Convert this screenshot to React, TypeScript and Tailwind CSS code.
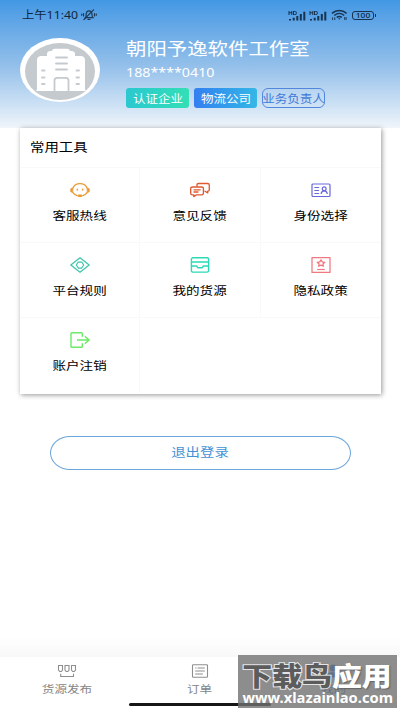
import React from 'react';
import { clsx } from 'clsx';

type IconProps = { className?: string };

// Single-line label; scale-x classes on it give the wide lettering
const Wide: React.FC<{ className?: string; children: React.ReactNode }> = ({ className, children }) => (
  <span className={clsx('inline-block whitespace-nowrap', className)}>{children}</span>
);

const HeadsetIcon: React.FC<IconProps> = ({ className }) => (
  <svg className={className} viewBox="0 0 20 16" fill="none" stroke="#ea9a35" strokeWidth="1.3" strokeLinecap="round">
    <path d="M3 6C4 3.200 6.600 1.700 10 1.700S16 3.200 17 6" />
    <path d="M3 10.600c.9 1.400 2.300 2.500 4.200 3.100M17 10.600c-.9 1.400-2.300 2.500-4.200 3.100" />
    <path d="M2.900 5.700C1 5.900.3 6.900.3 8.200s.7 2.300 2.600 2.500zM17.100 5.700c1.900.2 2.600 1.200 2.600 2.500s-.7 2.300-2.600 2.500z" fill="#ea9a35" strokeWidth=".3" />
    <path d="M7.300 7.200v.8M12.700 7.200v.8" strokeWidth="1.500" />
    <path d="M8.900 13.800h2.200" strokeWidth="2.400" />
  </svg>
);

const FeedbackIcon: React.FC<IconProps> = ({ className }) => (
  <svg className={className} viewBox="0 0 20 16" fill="none" stroke="#df5a30" strokeWidth="1.35" strokeLinejoin="round" strokeLinecap="round">
    <path d="M7 4V2.800C7 2 7.700 1.500 8.500 1.500h9c1 0 1.800.5 1.800 1.400v4.800c0 .9-.7 1.400-1.600 1.400v1.800L15 9.200" />
    <path d="M2.400 5h9.300c1 0 1.700.5 1.700 1.300v5.200c0 .8-.7 1.300-1.700 1.300H6.400L3.800 14.600v-1.800H2.400c-1 0-1.700-.5-1.700-1.300V6.300C.7 5.500 1.400 5 2.400 5z" />
    <path d="M4 7.800h6.200M4 10h4" />
  </svg>
);

const IdCardIcon: React.FC<IconProps> = ({ className }) => (
  <svg className={className} viewBox="0 0 20 16" fill="none" stroke="#6868dc" strokeWidth="1.2">
    <rect x="1" y="2" width="18" height="12.500" rx="1" />
    <path d="M3.400 5.500h4.700M3.400 8.500h4.700M3.400 11.500h4.700" />
    <circle cx="13.200" cy="6.800" r="1.900" />
    <path d="M10.100 12c.2-2 1.200-3.200 3.100-3.200s2.900 1.200 3.100 3.200" />
  </svg>
);

const RulesIcon: React.FC<IconProps> = ({ className }) => (
  <svg className={className} viewBox="0 0 20 16" fill="none" stroke="#3fc4ab" strokeWidth="1.25" strokeLinejoin="round">
    <path d="M10 .8 19.200 8 10 15.200.8 8z" />
    <path d="M8.300 5h3.400L13.700 8l-2 3H8.300l-2-3z" />
  </svg>
);

const GoodsIcon: React.FC<IconProps> = ({ className }) => (
  <svg className={className} viewBox="0 0 20 16" fill="none" stroke="#2bdab5" strokeWidth="1.4" strokeLinejoin="round">
    <rect x="1.400" y=".8" width="17.200" height="14.300" rx="1.600" />
    <path d="M1.400 5h17.200M1.400 9h5.200c.6 0 .5 1.800 1.500 1.800h3.800c1 0 .9-1.800 1.500-1.800h5.200" />
  </svg>
);

const PrivacyIcon: React.FC<IconProps> = ({ className }) => (
  <svg className={className} viewBox="0 0 20 16" fill="none" stroke="#f07880" strokeWidth="1.25" strokeLinejoin="round">
    <rect x="1" y=".6" width="18" height="14.800" />
    <path d="m10 2.900 1.200 2 2.600.4-1.900 1.600.5 2.300L10 8.200 7.600 9.200l.5-2.300-1.900-1.600 2.600-.4z" strokeWidth="1.3" />
    <path d="M6.200 12.500h7.600" strokeWidth="1.2" />
  </svg>
);

const SignOutIcon: React.FC<IconProps> = ({ className }) => (
  <svg className={className} viewBox="0 0 20 16" fill="none" stroke="#6bea68" strokeWidth="1.4" strokeLinejoin="round">
    <path d="M12.300 4.800V1.600c0-.5-.3-.8-.8-.8H1.800c-.5 0-.8.3-.8.8v12.800c0 .5.3.8.8.8h9.700c.5 0 .8-.3.8-.8v-3.200" />
    <path d="M7 8h12M14.800 4.400 19.200 8l-4.400 3.600" />
  </svg>
);

const ShipIcon: React.FC<IconProps> = ({ className }) => (
  <svg className={className} viewBox="0 0 20 14" fill="none" stroke="#8e8e8e" strokeWidth="1.1">
    <path d="M1.500 1.500h4v4.500L4.300 7.500H2.700L1.500 6zM8 1.500h4v4.500l-1.200 1.500H9.200L8 6zM14.500 1.500h4v4.500l-1.200 1.500h-1.600L14.500 6z" />
    <path d="M3.700 9.800v2.700h12.800V9.800" />
  </svg>
);

const OrderIcon: React.FC<IconProps> = ({ className }) => (
  <svg className={className} viewBox="0 0 18 14" fill="none" stroke="#8e8e8e" strokeWidth="1.1">
    <rect x="1.500" y=".8" width="15" height="12.400" rx=".8" />
    <path d="M4.200 4h1.300M6.500 4h7.300M4.200 7h9.600M4.200 10h7.600" />
  </svg>
);

const MutedBell: React.FC<IconProps> = ({ className }) => (
  <svg className={className} viewBox="0 0 16 12" fill="none" stroke="#1d3b58" strokeWidth="1.2" strokeLinecap="round">
    <path d="M4.300 8.600c1-1 .7-2.200.9-3.900C5.500 3 6.500 1.800 8 1.800c1.700 0 2.700 1.200 2.900 2.900.2 1.700 0 2.900 1 3.900z" />
    <path d="M7 10.400h2M3 10.500 12.500.8M2.500 4.500v2.500M.7 5.200v1M13.500 4.500v2.500M15.300 5.200v1" />
  </svg>
);

const Signal: React.FC<IconProps> = ({ className }) => (
  <svg className={className} viewBox="0 0 18 11" fill="#17334f">
    <path d="M.5 1h1v1.300h1.800V1h1v4h-1V3.200H1.500V5h-1zM5 1h2c1.200 0 1.800.7 1.800 2S8.200 5 7 5H5zm1 .8v2.400h1c.6 0 .8-.4.8-1.200s-.2-1.200-.8-1.200z" fillRule="evenodd" />
    <path d="M1 9h2v1.500H1zM4.700 7.800h2v2.700h-2zM8.300 6h2v4.500h-2zM11.800 4h2v6.500h-2zM15.300 1.800h2v8.700h-2z" />
  </svg>
);

const Wifi: React.FC<IconProps> = ({ className }) => (
  <svg className={className} viewBox="0 0 18 12" fill="none" stroke="#17334f" strokeWidth="1.5">
    <path d="M1 4.300c4.500-4 11-4 15.500 0M3.500 6.500c3.200-2.700 7.300-2.700 10.500 0M6 8.500c1.800-1.300 3.700-1.300 5.500 0" />
    <path d="M7.500 9.500h2.600L8.800 11z" fill="#17334f" stroke="none" />
    <path d="M1.700 8.500v2.800M4 8.500v2.800M14.500 8.200v3M16 8.200v3" strokeWidth="1" />
  </svg>
);

const Building: React.FC<IconProps> = ({ className }) => (
  <svg className={className} viewBox="0 0 80 64">
    <ellipse cx="40" cy="32" rx="40" ry="32" fill="#fff" />
    <ellipse cx="40" cy="33.500" rx="35" ry="28.500" fill="#c5cacf" />
    <path d="M15 53c1.300 0 2-.7 2-2V22c0-2.600 1.700-4 4.500-4H27v-2c0-2 1.400-3 3.600-3h1.400c0-1.200 1.200-2.200 3-2.200h12c1.800 0 3 1 3 2.200h1.400c2.200 0 3.600 1 3.600 3v2h5.500c2.800 0 4.500 1.400 4.500 4v29c0 1.300.7 2 2 2z" fill="#fff" />
    <g fill="none" stroke="#c5cacf" strokeWidth="1.8" strokeLinecap="round">
      <path d="M36 19.500h11M36 25.500h11M36 31.500h11M22 32.500h2.500M22 39.500h2.500M22 46h2.500M56.500 32.500H59M56.500 39.500H59M56.500 46H59" />
      <path d="M34.500 53V42.500c0-1.800 1-2.700 2.800-2.700h8.400c1.800 0 2.800.9 2.800 2.700V53" />
    </g>
  </svg>
);

const tools: { icon: React.FC<IconProps>; label: string }[] = [
  { icon: HeadsetIcon, label: '客服热线' },
  { icon: FeedbackIcon, label: '意见反馈' },
  { icon: IdCardIcon, label: '身份选择' },
  { icon: RulesIcon, label: '平台规则' },
  { icon: GoodsIcon, label: '我的货源' },
  { icon: PrivacyIcon, label: '隐私政策' },
  { icon: SignOutIcon, label: '账户注销' },
];

const tagBase = 'flex h-5 w-[63px] items-center justify-center rounded-[3px] text-[11px] text-white';

export default function App() {
  return (
    <div className="relative flex h-[711px] w-[400px] flex-col overflow-hidden bg-white font-['Noto_Sans','Noto_Sans_CJK_SC',sans-serif] leading-none text-black">
      <header className="h-[128px] shrink-0 bg-linear-to-b from-[#4298e4] via-[#94c0ea] via-52% to-[#f0f5fa]">
        {/* Status bar */}
        <div className="flex h-[30px] items-center pl-[22px] text-[#10263c]">
          <div className="w-[57px] shrink-0 text-[11.5px]">
            <Wide className="origin-left scale-x-[1.07]">上午11:40</Wide>
          </div>
          <MutedBell className="ml-[2px] h-3 w-4 shrink-0" />
          <Signal className="ml-[191px] h-[11px] w-[18px] shrink-0" />
          <Signal className="ml-[3px] h-[11px] w-[18px] shrink-0" />
          <Wifi className="ml-1 h-3 w-[17px] shrink-0" />
          <div className="ml-[4px] flex h-[9px] w-[22px] shrink-0 items-center justify-center rounded-[3px] border border-[#17334f] text-[7px]">
            <Wide className="scale-x-[1.2] font-medium">100</Wide>
          </div>
          <div className="ml-px h-[3px] w-px bg-[#17334f]" />
        </div>

        <div className="flex pl-5">
          <Building className="mt-2 h-16 w-20 shrink-0" />
          <div className="ml-[26px] flex flex-col items-start">
            <Wide className="mt-[10px] origin-left scale-x-[1.2] text-[17px] leading-[18px] text-white">朝阳予逸软件工作室</Wide>
            <Wide className="mt-[7px] origin-left scale-x-[1.14] text-[12.5px] leading-[16px] text-white">188****0410</Wide>
            <div className="mt-[7px] flex gap-[5px]">
              <div className={clsx(tagBase, 'bg-linear-to-r from-[#2bc8cf] to-[#33dfb5]')}>
                <Wide className="scale-x-[1.14]">认证企业</Wide>
              </div>
              <div className={clsx(tagBase, 'bg-linear-to-r from-[#347ff0] to-[#35b7e6]')}>
                <Wide className="scale-x-[1.14]">物流公司</Wide>
              </div>
              <div className="flex h-5 w-[63px] items-center justify-center rounded-[6px] border border-[#5287dc] text-[11px] text-[#3f7ad8]">
                <Wide className="scale-x-[1.14]">业务负责人</Wide>
              </div>
            </div>
          </div>
        </div>
      </header>

      {/* Tools */}
      <section className="mx-5 h-[266px] w-[361px] shrink-0 bg-white shadow-[1px_1px_5px_rgba(0,0,0,0.42)]">
        <h2 className="flex h-10 items-center border-b border-[#f9f9f9] pl-[10px] text-[12px]">
          <Wide className="origin-left scale-x-[1.2]">常用工具</Wide>
        </h2>
        <div className="grid grid-cols-3">
          {tools.map(({ icon: Icon, label }, i) => (
            <div
              key={label}
              className={clsx('flex h-[75px] flex-col items-center border-[#f9f9f9] pt-[14px]', i % 3 !== 2 && 'border-r', i < 6 && 'border-b')}
            >
              <Icon className="h-4 w-5" />
              <Wide className="mt-[11px] scale-x-[1.2] text-[11.3px] leading-[14px]">{label}</Wide>
            </div>
          ))}
        </div>
      </section>

      <button className="mt-[42px] ml-[50px] flex h-[34px] w-[301px] shrink-0 items-center justify-center rounded-[20px/17px] border border-[#6ba6dc] text-[12px] text-[#4592d4]">
        <Wide className="scale-x-[1.2]">退出登录</Wide>
      </button>

      <div className="mt-auto h-5 shrink-0 bg-linear-to-b from-white to-[#f8f8f8]" />
      <nav className="grid h-[54px] shrink-0 grid-cols-3 bg-white text-[10.5px] text-[#858585]">
        <div className="flex flex-col items-center pt-[7px]">
          <ShipIcon className="h-[14px] w-5" />
          <Wide className="mt-[4px] scale-x-[1.2] leading-[14px]">货源发布</Wide>
        </div>
        <div className="flex flex-col items-center pt-[7px]">
          <OrderIcon className="h-[14px] w-[18px]" />
          <Wide className="mt-[4px] scale-x-[1.2] leading-[14px]">订单</Wide>
        </div>
        <div className="flex flex-col items-center pt-[7px] text-[#2f7fd0]">
          <svg className="h-[14px] w-5" viewBox="0 0 20 16" fill="#2f7fd0">
            <circle cx="10" cy="4.500" r="4" />
            <path d="M2 15.500c0-4 3-6 8-6s8 2 8 6z" />
          </svg>
          <Wide className="mt-[4px] scale-x-[1.2] leading-[14px]">我的</Wide>
        </div>
      </nav>
      <div className="absolute bottom-[5px] left-[129px] h-[3px] w-[142px] rounded-full bg-[#161616]" />

      {/* Site badge over the tab bar */}
      <div className="absolute top-[655px] left-[238px] flex h-[53px] w-[159px] flex-col items-center bg-[#707070]/80 text-white">
        <div className="mt-[7px] flex h-[28px] scale-x-[1.15] items-center justify-center text-[26px] font-black">
          <Wide className="text-[#5c5c5c] [-webkit-text-stroke:2px_#e4e4e4] [paint-order:stroke_fill]">下载鸟</Wide>
          <Wide className="[text-shadow:1px_1px_1px_#666]">应用</Wide>
        </div>
        <Wide className="mt-px scale-x-[1.05] text-[14px] leading-[14px] font-bold">www.xlazainlao.com</Wide>
      </div>
    </div>
  );
}
